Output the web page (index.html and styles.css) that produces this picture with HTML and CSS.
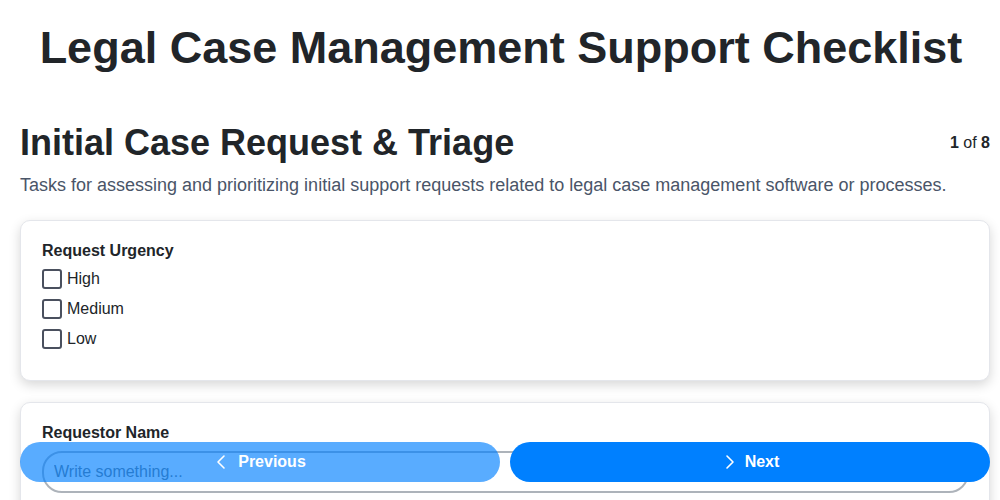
FILE: index.html
```html
<!DOCTYPE html>
<html lang="en">
<head>
<meta charset="utf-8">
<title>Legal Case Management Support Checklist</title>
<link rel="stylesheet" href="styles.css">
</head>
<body>
<main class="page">
  <h1 class="title">Legal Case Management Support Checklist</h1>
  <section class="step">
    <div class="step-head">
      <h2 class="step-title">Initial Case Request &amp; Triage</h2>
      <div class="step-count"><b>1</b> of <b>8</b></div>
    </div>
    <p class="step-desc">Tasks for assessing and prioritizing initial support requests related to legal case management software or processes.</p>

    <div class="card">
      <div class="field-label">Request Urgency</div>
      <ul class="options">
        <li class="option"><span class="box"></span><span>High</span></li>
        <li class="option"><span class="box"></span><span>Medium</span></li>
        <li class="option"><span class="box"></span><span>Low</span></li>
      </ul>
    </div>

    <div class="card">
      <div class="field-label field-label-text">Requestor Name</div>
      <input class="text-input" type="text" placeholder="Write something...">
    </div>
  </section>
</main>

<nav class="pager">
  <button class="btn btn-prev" type="button">
    <svg class="chev" width="16" height="16" viewBox="0 0 16 16"><polyline points="10,2 4,8 10,14" fill="none" stroke="#fff" stroke-width="1.6" stroke-linecap="round" stroke-linejoin="round"/></svg>
    <span>Previous</span>
  </button>
  <button class="btn btn-next" type="button">
    <svg class="chev" width="16" height="16" viewBox="0 0 16 16"><polyline points="6,2 12,8 6,14" fill="none" stroke="#fff" stroke-width="1.6" stroke-linecap="round" stroke-linejoin="round"/></svg>
    <span>Next</span>
  </button>
</nav>
</body>
</html>
```

FILE: styles.css
```css
* { box-sizing: border-box; }

html, body {
  margin: 0;
  padding: 0;
  background: #ffffff;
  font-family: "Liberation Sans", Arial, sans-serif;
  color: #212529;
  overflow: hidden;
}

.page {
  padding: 21px 10px 80px 20px;
}

.title {
  margin: 0 8px 0 0;
  font-size: 45px;
  line-height: 54px;
  font-weight: 700;
  text-align: center;
  color: #212529;
}

.step {
  margin-top: 46px;
}

.step-head {
  display: flex;
  justify-content: space-between;
  align-items: center;
}

.step-title {
  margin: 0;
  font-size: 36px;
  line-height: 43px;
  font-weight: 700;
  color: #212529;
}

.step-count {
  font-size: 16px;
  color: #212529;
}

.step-desc {
  margin: 10px 0 24px 0;
  font-size: 18px;
  line-height: 22px;
  color: #4a5568;
}

.card {
  background: #fff;
  border: 1px solid #e4e6eb;
  border-radius: 10px;
  box-shadow: 0 4px 12px rgba(0, 0, 0, 0.16);
  padding: 20px 20px 20px 21px;
  margin-bottom: 21px;
}

.field-label {
  font-size: 16px;
  line-height: 19px;
  font-weight: 700;
  margin-bottom: 4px;
}

.field-label-text {
  margin-bottom: 9px;
}

.options {
  list-style: none;
  margin: 0 0 6px 0;
  padding: 0;
}

.option {
  display: flex;
  align-items: center;
  gap: 5px;
  height: 30px;
  font-size: 16px;
  color: #212529;
}

.box {
  width: 20px;
  height: 20px;
  border: 2px solid #4a505e;
  border-radius: 3px;
  flex: none;
}

.text-input {
  display: block;
  width: 100%;
  height: 42px;
  border: 2px solid #adb3ba;
  border-radius: 20px;
  padding: 0 10px;
  font-family: "Liberation Sans", Arial, sans-serif;
  font-size: 16px;
  color: #212529;
  background: #fff;
}

.text-input::placeholder {
  color: #6c757d;
}

.pager {
  position: fixed;
  left: 20px;
  right: 10px;
  bottom: 18px;
  display: flex;
  gap: 10px;
}

.btn {
  flex: 1;
  height: 40px;
  border: none;
  border-radius: 20px;
  background: #0080ff;
  color: #fff;
  font-family: "Liberation Sans", Arial, sans-serif;
  font-size: 16px;
  font-weight: 700;
  display: flex;
  align-items: center;
  justify-content: center;
  gap: 8px;
  padding: 0;
}

.btn-prev {
  opacity: 0.65;
}

.chev {
  display: block;
}
```
